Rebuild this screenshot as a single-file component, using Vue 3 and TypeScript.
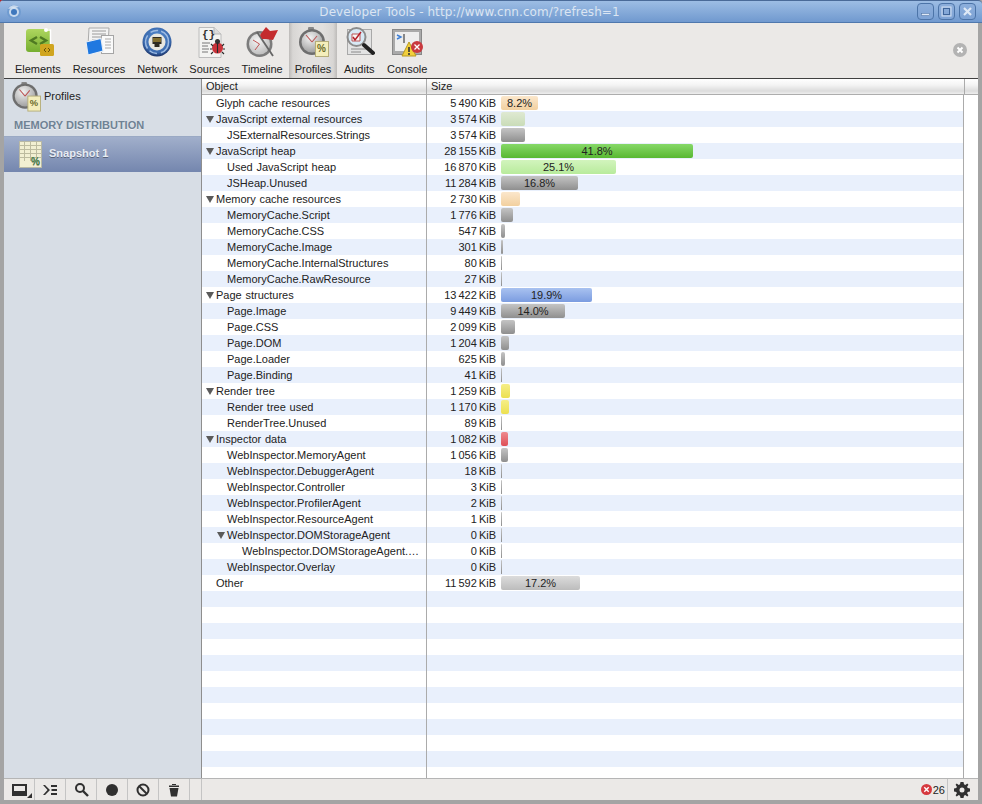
<script setup lang="ts">
interface Row { name: string; size: string; indent: number; arrow?: boolean; w: number; color: string; pct?: string }
const rows: Row[] = [
  { name: 'Glyph cache resources', size: '5 490 KiB', indent: 0, w: 37, color: 'peach', pct: '8.2%' },
  { name: 'JavaScript external resources', size: '3 574 KiB', indent: 0, arrow: true, w: 24, color: 'sage' },
  { name: 'JSExternalResources.Strings', size: '3 574 KiB', indent: 1, w: 24, color: 'gray' },
  { name: 'JavaScript heap', size: '28 155 KiB', indent: 0, arrow: true, w: 192, color: 'green', pct: '41.8%' },
  { name: 'Used JavaScript heap', size: '16 870 KiB', indent: 1, w: 115, color: 'lime', pct: '25.1%' },
  { name: 'JSHeap.Unused', size: '11 284 KiB', indent: 1, w: 77, color: 'gray', pct: '16.8%' },
  { name: 'Memory cache resources', size: '2 730 KiB', indent: 0, arrow: true, w: 19, color: 'peach' },
  { name: 'MemoryCache.Script', size: '1 776 KiB', indent: 1, w: 12, color: 'gray' },
  { name: 'MemoryCache.CSS', size: '547 KiB', indent: 1, w: 4, color: 'gray' },
  { name: 'MemoryCache.Image', size: '301 KiB', indent: 1, w: 2, color: 'gray' },
  { name: 'MemoryCache.InternalStructures', size: '80 KiB', indent: 1, w: 1, color: 'gray' },
  { name: 'MemoryCache.RawResource', size: '27 KiB', indent: 1, w: 1, color: 'gray' },
  { name: 'Page structures', size: '13 422 KiB', indent: 0, arrow: true, w: 91, color: 'blue', pct: '19.9%' },
  { name: 'Page.Image', size: '9 449 KiB', indent: 1, w: 64, color: 'gray', pct: '14.0%' },
  { name: 'Page.CSS', size: '2 099 KiB', indent: 1, w: 14, color: 'gray' },
  { name: 'Page.DOM', size: '1 204 KiB', indent: 1, w: 8, color: 'gray' },
  { name: 'Page.Loader', size: '625 KiB', indent: 1, w: 4, color: 'gray' },
  { name: 'Page.Binding', size: '41 KiB', indent: 1, w: 1, color: 'gray' },
  { name: 'Render tree', size: '1 259 KiB', indent: 0, arrow: true, w: 9, color: 'yellow' },
  { name: 'Render tree used', size: '1 170 KiB', indent: 1, w: 8, color: 'yellow' },
  { name: 'RenderTree.Unused', size: '89 KiB', indent: 1, w: 1, color: 'gray' },
  { name: 'Inspector data', size: '1 082 KiB', indent: 0, arrow: true, w: 7, color: 'red' },
  { name: 'WebInspector.MemoryAgent', size: '1 056 KiB', indent: 1, w: 7, color: 'gray' },
  { name: 'WebInspector.DebuggerAgent', size: '18 KiB', indent: 1, w: 1, color: 'gray' },
  { name: 'WebInspector.Controller', size: '3 KiB', indent: 1, w: 1, color: 'gray' },
  { name: 'WebInspector.ProfilerAgent', size: '2 KiB', indent: 1, w: 1, color: 'gray' },
  { name: 'WebInspector.ResourceAgent', size: '1 KiB', indent: 1, w: 1, color: 'gray' },
  { name: 'WebInspector.DOMStorageAgent', size: '0 KiB', indent: 1, arrow: true, w: 1, color: 'gray' },
  { name: 'WebInspector.DOMStorageAgent.…', size: '0 KiB', indent: 2, w: 1, color: 'gray' },
  { name: 'WebInspector.Overlay', size: '0 KiB', indent: 1, w: 1, color: 'gray' },
  { name: 'Other', size: '11 592 KiB', indent: 0, w: 79, color: 'silver', pct: '17.2%' },
]
const fillers: number[] = Array.from({ length: 12 }, (_, i) => i)
const tabs: string[] = ['Elements', 'Resources', 'Network', 'Sources', 'Timeline', 'Profiles', 'Audits', 'Console']
</script>

<template>
  <div class="window">
    <header class="titlebar">
      <svg class="app-icon" width="14" height="14" viewBox="0 0 14 14">
        <circle cx="7" cy="7" r="7" fill="#6f9bd0" />
        <circle cx="7" cy="7" r="5" fill="#c8daee" />
        <circle cx="7" cy="7" r="3" fill="#3f78bd" />
        <path d="M1 4 A7 7 0 0 1 12 2 L7 3 Z" fill="#dbe6f3" opacity=".8" />
      </svg>
      <span class="title">Developer Tools - http://www.cnn.com/?refresh=1</span>
      <div class="win-buttons">
        <span class="win-btn"><svg width="17" height="17" viewBox="0 0 17 17"><rect x="4.5" y="10.5" width="8" height="2" fill="#dfe9f6" stroke="#4a6f9f" stroke-width=".5" /></svg></span>
        <span class="win-btn"><svg width="17" height="17" viewBox="0 0 17 17"><rect x="5.5" y="5.5" width="6" height="6" fill="none" stroke="#3f659a" stroke-width="1" /><rect x="4" y="4" width="9" height="9" fill="none" stroke="#d3e0f1" stroke-width="1" /></svg></span>
        <span class="win-btn"><svg width="17" height="17" viewBox="0 0 17 17"><path d="M5 5 L12 12 M12 5 L5 12" stroke="#dfe9f6" stroke-width="2.2" /></svg></span>
      </div>
    </header>

    <div class="inner">
      <nav class="toolbar">
        <div v-for="t in tabs" :key="t" class="tab" :class="{ selected: t === 'Profiles' }">
          <svg v-if="t === 'Elements'" width="32" height="32" viewBox="0 0 32 32">
            <defs><linearGradient id="eg" x1="0" y1="0" x2="0" y2="1"><stop offset="0" stop-color="#aed65f" /><stop offset="1" stop-color="#76ae30" /></linearGradient></defs>
            <rect x="4" y="2" width="25" height="23" rx="3" fill="url(#eg)" />
            <path d="M15 10 L9 13.5 L15 17 M18 10 L24 13.5 L18 17" fill="none" stroke="#4f7a22" stroke-width="2.4" />
            <path d="M24 3 H28.5 V17" fill="none" stroke="#fff" stroke-width="1.5" /><circle cx="24" cy="3" r="2" fill="#fff" />
            <rect x="18" y="17" width="14" height="12" rx="1.5" fill="#d0a51f" />
            <path d="M24 21 L22 23 L24 25 M26 21 L28 23 L26 25" fill="none" stroke="#6a5208" stroke-width="1" />
          </svg>
          <svg v-else-if="t === 'Resources'" width="32" height="32" viewBox="0 0 32 32">
            <path d="M6 1 H26 L25 19 H5 Z" fill="#f3f3f3" stroke="#aaa" />
            <path d="M9 4 H23 M9 7 H23 M9 10 H20 M9 13 H17" stroke="#9a9a9a" />
            <rect x="18.5" y="8.5" width="12" height="18" fill="#fafafa" stroke="#a5a5a5" />
            <path d="M22 12 H28 M22 15 H28 M22 18 H28 M22 21 H28" stroke="#aaa" />
            <path d="M3 15 L18 11.5 L20 24 L5 28 Z" fill="#1f78e0" stroke="#e6edf5" stroke-width="1.2" />
          </svg>
          <svg v-else-if="t === 'Network'" width="32" height="32" viewBox="0 0 32 32">
            <defs><radialGradient id="ng" cx=".5" cy=".4" r=".62"><stop offset="0" stop-color="#5d93d6" /><stop offset=".75" stop-color="#3a69ad" /><stop offset="1" stop-color="#15295c" /></radialGradient></defs>
            <circle cx="16" cy="15" r="14.5" fill="url(#ng)" />
            <circle cx="16" cy="15" r="11.5" fill="none" stroke="#9dbbe3" stroke-width="1.5" stroke-dasharray="14 4 8 3" />
            <circle cx="16" cy="15" r="8.5" fill="#e8e7e0" />
            <path d="M11.5 10 H20.5 V17 H18.5 V20 H13.5 V17 H11.5 Z" fill="#2d2a22" />
            <path d="M13 11 V15 M15 11 V15 M17 11 V15 M19 11 V15" stroke="#d9b23c" />
          </svg>
          <svg v-else-if="t === 'Sources'" width="32" height="32" viewBox="0 0 32 32">
            <path d="M5 0.5 H20 L27 7 V30.5 H5 Z" fill="#f3f3f1" stroke="#bcbcbc" />
            <path d="M20 0.5 V7 H27" fill="#dcdcdc" stroke="#b5b5b5" />
            <text x="8" y="11" class="src-braces">{}</text>
            <path d="M8 16 H16 M8 19 H14 M8 22 H15 M8 25 H14" stroke="#777" />
            <circle cx="23.5" cy="21" r="5.5" fill="#c9333a" />
            <circle cx="23.5" cy="14.5" r="2.5" fill="#333" />
            <path d="M17 17 L19 19 M16 22 H18 M17 27 L19 25 M30 17 L28 19 M31 22 H29 M30 27 L28 25 M23.5 15 V26" stroke="#2a2a2a" stroke-width="1.1" />
          </svg>
          <svg v-else-if="t === 'Timeline'" width="32" height="32" viewBox="0 0 32 32">
            <defs><radialGradient id="tg" cx=".4" cy=".35" r=".8"><stop offset="0" stop-color="#f4f4f4" /><stop offset="1" stop-color="#b4b4b4" /></radialGradient></defs>
            <circle cx="13.5" cy="17" r="13" fill="#7c7c7c" />
            <circle cx="13.5" cy="17" r="10.5" fill="url(#tg)" />
            <path d="M13.5 17 L7 13 M13.5 17 L9 23" stroke="#c05555" stroke-width="1" />
            <path d="M11 5 L27 29" stroke="#666" stroke-width="1.8" />
            <path d="M14 8 L20 0 L24 4 L32 3 L27 13 L20 12 L16 12 Z" fill="#c42c2e" />
          </svg>
          <svg v-else-if="t === 'Profiles'" width="32" height="32" viewBox="0 0 32 32">
            <defs><radialGradient id="pg" cx=".4" cy=".3" r=".8"><stop offset="0" stop-color="#f2f2f2" /><stop offset="1" stop-color="#969696" /></radialGradient></defs>
            <rect x="11" y="0" width="6" height="3" rx="1" fill="#888" />
            <circle cx="15" cy="15" r="13" fill="#6e6e6e" />
            <circle cx="15" cy="15" r="10.5" fill="url(#pg)" />
            <path d="M15 15 L9 8 M15 15 L20 9" stroke="#b55" stroke-width="1.1" />
            <rect x="18.5" y="14.5" width="13" height="15" fill="#f4eebb" stroke="#b5ad7a" />
            <text x="20" y="25" class="pct">%</text>
          </svg>
          <svg v-else-if="t === 'Audits'" width="32" height="32" viewBox="0 0 32 32">
            <rect x="4.5" y="2.5" width="24" height="25" fill="#e3e3e3" stroke="#a9a9a9" />
            <path d="M8 22 H24 M8 25 H18" stroke="#8a8a8a" />
            <circle cx="13.5" cy="10" r="9" fill="#d8e9f5" stroke="#8c8c8c" stroke-width="2" />
            <path d="M9 7 H17 V14 H9 Z" fill="#f6f6f6" stroke="#b55" />
            <path d="M10 10 L12 13 L18 5" stroke="#b6202a" stroke-width="1.5" fill="none" />
            <path d="M21 18 L30 26" stroke="#222" stroke-width="4" stroke-linecap="round" />
          </svg>
          <svg v-else width="32" height="32" viewBox="0 0 32 32">
            <rect x="1.5" y="2.5" width="29" height="25" fill="#aaa" stroke="#888" />
            <rect x="4" y="5" width="24" height="19" fill="#eeeeee" />
            <path d="M6 8 L10 10 L6 12" fill="none" stroke="#3d7fd6" stroke-width="1.4" />
            <path d="M13 7 V16" stroke="#222" />
            <path d="M18 15 L25 29 H11 Z" fill="#f2cf3c" stroke="#b79a20" />
            <path d="M18 20 V25 M18 26 V28" stroke="#333" stroke-width="1.6" />
            <circle cx="26" cy="20" r="6" fill="#c93a3f" />
            <path d="M23.5 17.5 L28.5 22.5 M28.5 17.5 L23.5 22.5" stroke="#fff" stroke-width="1.3" />
          </svg>
          <span class="tab-label">{{ t }}</span>
        </div>
        <span class="spacer"></span>
        <svg class="close-drawer" width="14" height="14" viewBox="0 0 14 14">
          <circle cx="7" cy="7" r="7" fill="#b3b3b3" />
          <path d="M4.5 4.5 L9.5 9.5 M9.5 4.5 L4.5 9.5" stroke="#fff" stroke-width="2" />
        </svg>
      </nav>

      <main class="main">
        <aside class="sidebar">
          <div class="profiles-head">
            <svg width="30" height="30" viewBox="0 0 32 32">
              <defs><radialGradient id="pg2" cx=".4" cy=".3" r=".8"><stop offset="0" stop-color="#f2f2f2" /><stop offset="1" stop-color="#969696" /></radialGradient></defs>
              <rect x="11" y="0" width="6" height="3" rx="1" fill="#888" />
              <circle cx="15" cy="15" r="13.5" fill="#6e6e6e" />
              <circle cx="15" cy="15" r="11" fill="url(#pg2)" />
              <path d="M15 15 L9 8 M15 15 L20 9" stroke="#b55" stroke-width="1.1" />
              <rect x="18" y="15" width="13.5" height="16" fill="#f4eebb" stroke="#b5ad7a" />
              <text x="20" y="26" class="pct">%</text>
            </svg>
            <span>Profiles</span>
          </div>
          <div class="group-title">MEMORY DISTRIBUTION</div>
          <div class="snapshot">
            <svg width="23" height="27" viewBox="0 0 23 27">
              <rect x=".5" y=".5" width="22" height="26" fill="#f2efd2" stroke="#b9b9a5" />
              <path d="M1 4.5 H22 M1 8.5 H22 M1 12.5 H22 M1 16.5 H22 M5.5 1 V20 M11.5 1 V20 M17.5 1 V16" stroke="#bdbb9f" />
              <text x="12" y="24" class="pct green">%</text>
            </svg>
            <span>Snapshot 1</span>
          </div>
        </aside>

        <section class="grid">
          <div class="grid-head">
            <div class="col-name">Object</div>
            <div class="col-size">Size</div>
          </div>
          <div class="grid-body">
            <div v-for="r in rows" :key="r.name" class="row">
              <div class="col-name" :class="'ind' + r.indent">
                <span v-if="r.arrow" class="arrow"></span>
                <span>{{ r.name }}</span>
              </div>
              <div class="cell">
                <span class="size">{{ r.size }}</span>
                <span class="bar" :class="r.color" :style="{ width: r.w + 'px' }">{{ r.pct }}</span>
              </div>
            </div>
            <div v-for="f in fillers" :key="f" class="row filler"></div>
            <div class="divider d1"></div>
            <div class="divider d2"></div>
          </div>
        </section>
      </main>

      <footer class="status">
        <div class="sb-btn">
          <svg width="15" height="12" viewBox="0 0 15 12"><path d="M0 0 H15 V12 H0 Z M2 2 V7 H13 V2 Z" fill="#303030" fill-rule="evenodd" /></svg>
          <span class="corner"></span>
        </div>
        <div class="sb-btn">
          <svg width="16" height="12" viewBox="0 0 16 12"><path d="M1 1 H3 L8 6 L3 11 H1 L5.5 6 Z M9 1 H15 V3 H9 Z M9.5 5 H15 V7 H9.5 Z M9 9 H15 V11 H9 Z" fill="#303030" /></svg>
        </div>
        <div class="sb-btn">
          <svg width="15" height="15" viewBox="0 0 15 15"><circle cx="6" cy="6" r="4" fill="none" stroke="#303030" stroke-width="2" /><path d="M9 9 L14 14" stroke="#303030" stroke-width="2.4" /></svg>
        </div>
        <div class="sb-btn">
          <svg width="14" height="14" viewBox="0 0 14 14"><circle cx="7" cy="7" r="6" fill="#303030" /></svg>
        </div>
        <div class="sb-btn">
          <svg width="14" height="14" viewBox="0 0 14 14"><circle cx="7" cy="7" r="5.5" fill="none" stroke="#303030" stroke-width="2" /><path d="M3 3 L11 11" stroke="#303030" stroke-width="2" /></svg>
        </div>
        <div class="sb-btn">
          <svg width="12" height="14" viewBox="0 0 12 14"><path d="M1 2.5 H11 V4 H1 Z M4 1 H8 V2 H4 Z M1.5 5 H10.5 L9 13.5 H3 Z" fill="#303030" /></svg>
        </div>
        <div class="sb-gap"></div>
        <span class="spacer"></span>
        <svg class="err" width="11" height="11" viewBox="0 0 11 11"><circle cx="5.5" cy="5.5" r="5.5" fill="#d6393f" /><path d="M3.3 3.3 L7.7 7.7 M7.7 3.3 L3.3 7.7" stroke="#fff" stroke-width="1.4" /></svg>
        <span class="err-count">26</span>
        <div class="gear">
          <svg width="16" height="16" viewBox="0 0 16 16"><path fill-rule="evenodd" fill="#303030" d="M6.5 0 H9.5 L10 2.3 L11.3 2.9 L13.3 1.6 L14.4 2.7 L13.1 4.7 L13.7 6 L16 6.5 V9.5 L13.7 10 L13.1 11.3 L14.4 13.3 L13.3 14.4 L11.3 13.1 L10 13.7 L9.5 16 H6.5 L6 13.7 L4.7 13.1 L2.7 14.4 L1.6 13.3 L2.9 11.3 L2.3 10 L0 9.5 V6.5 L2.3 6 L2.9 4.7 L1.6 2.7 L2.7 1.6 L4.7 2.9 L6 2.3 Z M8 5.5 A2.5 2.5 0 1 0 8 10.5 A2.5 2.5 0 1 0 8 5.5 Z" /></svg>
        </div>
      </footer>
    </div>
  </div>
</template>

<style>
html, body { margin: 0; background: #b8232a; }
</style>

<style scoped>
.window {
  width: 982px;
  height: 804px;
  box-sizing: border-box;
  display: flex;
  flex-direction: column;
  overflow: hidden;
  font-family: "Liberation Sans", Arial, sans-serif;
  font-size: 11px;
  color: #222;
  background: #a4a4a4;
  border-radius: 4px 0 0 0;
}
.titlebar {
  height: 23px;
  flex: none;
  display: flex;
  align-items: center;
  position: relative;
  background: linear-gradient(#9dbde4, #7099cf);
  border-top: 1px solid #4a6a98;
  box-sizing: border-box;
  border-bottom: 1px solid #4f78ad;
  border-top-right-radius: 4px;
}
.app-icon { margin-left: 7px; }
.title {
  position: absolute;
  left: 0;
  right: 43px;
  text-align: center;
  font-family: "DejaVu Sans", sans-serif;
  font-size: 12px;
  color: #dbe5f2;
  letter-spacing: .06px;
}
.win-buttons { margin-left: auto; margin-right: 6px; display: flex; gap: 4px; }
.win-btn {
  width: 17px;
  height: 17px;
  box-sizing: border-box;
  display: block;
  border: 1px solid #4c74a8;
  border-radius: 4px;
  background: linear-gradient(#8caedb, #7ea3d5);
  overflow: hidden;
}
.win-btn svg { display: block; margin: -1px; }
.inner {
  flex: 1;
  min-height: 0;
  margin: 0 4px 4px;
  display: flex;
  flex-direction: column;
  background: #fff;
}
.toolbar {
  height: 56px;
  flex: none;
  box-sizing: border-box;
  display: flex;
  align-items: stretch;
  padding-left: 5px;
  background: #ebe9e7;
  border-bottom: 1px solid #404040;
}
.tab {
  padding: 4px 5.95px 0;
  display: flex;
  flex-direction: column;
  align-items: center;
}
.tab svg { display: block; }
.tab-label { margin-top: 4px; color: #222; line-height: 13px; }
.tab.selected {
  background: linear-gradient(90deg, #bdbbb9, #d8d6d4 8%, #e2e0de 30%, #e2e0de 70%, #d8d6d4 92%, #bdbbb9);
}
.spacer { flex: 1; }
.close-drawer { align-self: center; margin: 0 11px 2px 0; }
.main { flex: 1; min-height: 0; display: flex; }
.sidebar {
  width: 197px;
  flex: none;
  background: #d7dde5;
  border-right: 1px solid #8e8e8e;
}
.profiles-head {
  height: 33px;
  display: flex;
  align-items: flex-start;
  padding: 3px 0 0 7px;
  box-sizing: border-box;
  gap: 3px;
}
.profiles-head span { margin-top: 8px; }
.profiles-head svg { display: block; flex: none; }
.group-title {
  height: 24px;
  padding: 7px 0 0 10px;
  box-sizing: border-box;
  font-weight: 700;
  font-size: 11px;
  line-height: 13px;
  color: #6f8294;
  text-shadow: 0 1px 0 rgba(255,255,255,.5);
}
.snapshot {
  height: 36px;
  box-sizing: border-box;
  display: flex;
  align-items: center;
  gap: 7px;
  padding-left: 15px;
  background: linear-gradient(#a1afcb, #7486ae);
  border-top: 1px solid #9aa9c4;
  color: #e8ecf3;
  font-weight: 700;
  text-shadow: 0 1px 0 rgba(0,0,0,.35);
}
.snapshot svg { display: block; flex: none; }
.snapshot span { margin-top: -3px; }
.grid { flex: 1; min-width: 0; display: flex; flex-direction: column; background: #fff; }
.grid-head {
  height: 16px;
  flex: none;
  box-sizing: border-box;
  display: flex;
  background: linear-gradient(#fff, #f4f4f4 40%, #dcdcdc 80%, #eee);
  border-bottom: 1px solid #adadad;
}
.grid-head .col-name { padding-left: 4px; line-height: 15px; width: 224px; }
.grid-head .col-size {
  line-height: 15px;
  padding-left: 4px;
  width: 539px;
  flex: none;
  border-left: 1px solid #ababab;
  border-right: 1px solid #ababab;
  box-sizing: border-box;
}
.col-name { flex: none; box-sizing: border-box; }
.grid-body { flex: 1; min-height: 0; position: relative; overflow: hidden; }
.divider { position: absolute; top: 0; bottom: 0; width: 1px; background: #ababab; }
.d1 { left: 224px; }
.d2 { left: 761px; }
.row {
  width: 761px;
  height: 16px;
  display: flex;
  line-height: 16px;
  white-space: nowrap;
}
.row:nth-child(even) { background: #e9f0fc; }
.row .col-name { position: relative; width: 225px; word-spacing: .7px; }
.ind0 { padding-left: 14px; }
.ind1 { padding-left: 25px; }
.ind2 { padding-left: 40px; }
.arrow {
  position: absolute;
  top: 5px;
  margin-left: -10px;
  width: 0;
  height: 0;
  border-left: 4px solid transparent;
  border-right: 4px solid transparent;
  border-top: 7px solid #5a5a5a;
}
.cell { display: flex; align-items: center; }
.size { width: 69px; text-align: right; flex: none; word-spacing: -1px; }
.bar {
  margin-left: 5px;
  height: 14px;
  line-height: 14px;
  border-radius: 2px;
  text-align: center;
  display: block;
  flex: none;
  overflow: hidden;
}
.peach { background: linear-gradient(#fbe7cc, #f2d09f); }
.sage { background: linear-gradient(#dfe9d2, #c9dcb8); }
.gray { background: linear-gradient(#c4c4c4, #8f8f8f); }
.green { background: linear-gradient(#86d868, #58b832); }
.lime { background: linear-gradient(#d2f4bd, #b8eb9c); }
.blue { background: linear-gradient(#a9c2f0, #7b9ce0); }
.yellow { background: linear-gradient(#f6ee88, #ece050); }
.red { background: linear-gradient(#ee8a8f, #de4f56); }
.silver { background: linear-gradient(#dcdcdc, #bcbcbc); }
.status {
  height: 22px;
  flex: none;
  display: flex;
  align-items: center;
  box-sizing: border-box;
  background: #ebe9e7;
  border-top: 1px solid #b5b5b5;
}
.sb-btn {
  width: 31px;
  height: 21px;
  box-sizing: border-box;
  border-right: 1px solid #c4c4c4;
  display: flex;
  align-items: center;
  justify-content: center;
  position: relative;
}
.sb-gap { width: 12px; height: 21px; border-right: 1px solid #c4c4c4; box-sizing: border-box; }
.corner {
  position: absolute;
  right: 2px;
  bottom: 2px;
  width: 0;
  height: 0;
  border-left: 5px solid transparent;
  border-bottom: 5px solid #303030;
}
.err { margin-right: 1px; }
.err-count { margin-right: 2px; color: #222; }
.gear {
  width: 31px;
  height: 21px;
  box-sizing: border-box;
  border-left: 1px solid #c4c4c4;
  padding-right: 2px;
  display: flex;
  align-items: center;
  justify-content: center;
}
.src-braces { font-family: "Liberation Mono", monospace; font-size: 11px; font-weight: 700; fill: #333; }
.pct { font-family: "Liberation Sans", sans-serif; font-size: 10px; font-weight: 700; fill: #6b6b2a; }
.pct.green { fill: #3d7a45; }
</style>
